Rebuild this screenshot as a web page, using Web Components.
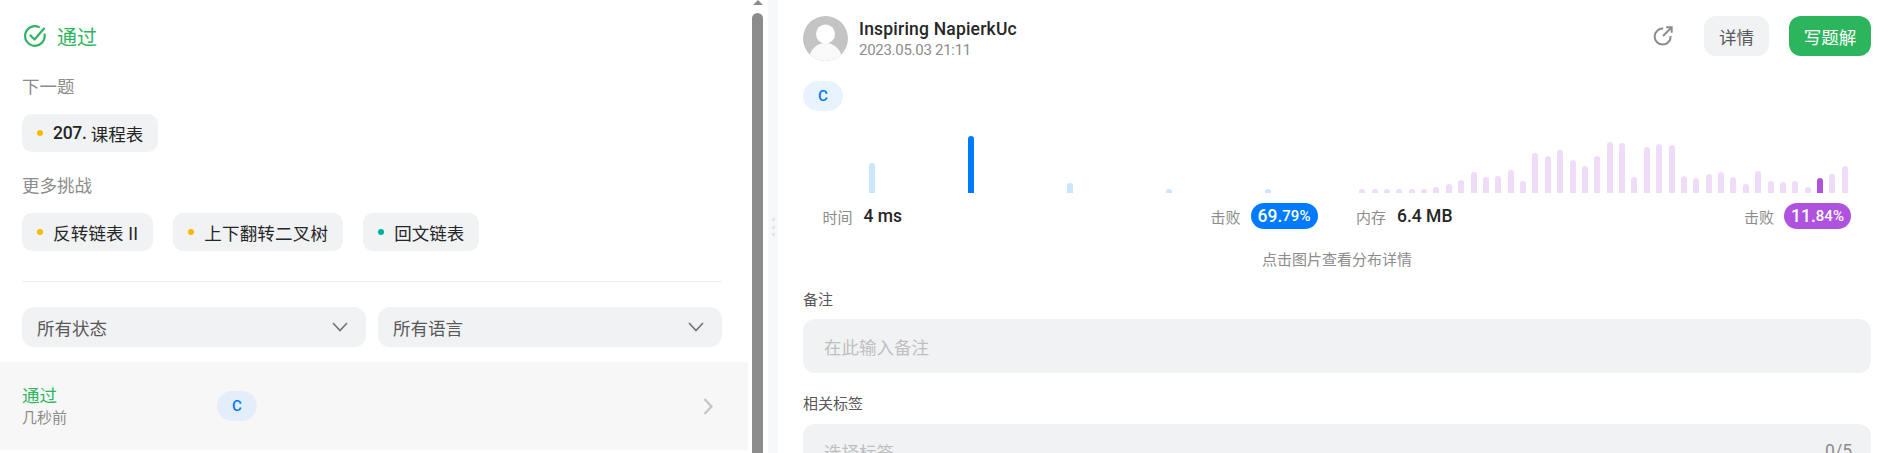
<!DOCTYPE html>
<html lang="zh">
<head>
<meta charset="utf-8">
<title>提交结果</title>
<style>
  html, body { margin: 0; height: 453px; overflow: hidden; background: #fff; }
  body { font-family: Roboto, "Noto Sans CJK SC", sans-serif; color: #262626; }
</style>
</head>
<body>
<submission-page>
  <result-panel slot="left"></result-panel>
  <detail-panel slot="right"></detail-panel>
</submission-page>

<script>
class SubmissionPage extends HTMLElement {
  connectedCallback() {
    this.attachShadow({ mode: 'open' });
    this.shadowRoot.innerHTML = `
      <style>
        :host { display: flex; height: 453px; overflow: hidden; }
        .left { display: block; width: 748px; flex: none; }
        .track { width: 20px; flex: none; display: flex; flex-direction: column; align-items: center; box-sizing: border-box; padding-right: 1px; background: #fff; }
        .arrow { width: 0; height: 0; border-left: 5.5px solid transparent; border-right: 5.5px solid transparent; border-bottom: 5px solid #8c8c8c; }
        .thumb { width: 11px; flex: 1; margin-top: 8px; background: #8c8c8c; border-radius: 6px 6px 0 0; }
        .divider { width: 10px; flex: none; background: #f7f8fa; display: flex; flex-direction: column; align-items: center; justify-content: center; gap: 4.5px; padding-top: 1px; box-sizing: border-box; padding-bottom: 0; }
        .divider i { width: 3px; height: 3px; background: #e6e6e6; }
        .right { flex: 1; min-width: 0; }
      </style>
      <div class="left"><slot name="left"></slot></div>
      <div class="track"><div class="arrow"></div><div class="thumb"></div></div>
      <div class="divider"><i></i><i></i><i></i></div>
      <div class="right"><slot name="right"></slot></div>
    `;
  }
}
customElements.define('submission-page', SubmissionPage);

class ProblemChip extends HTMLElement {
  connectedCallback() {
    const color = this.getAttribute('dot') || '#ffb800';
    this.attachShadow({ mode: 'open' });
    this.shadowRoot.innerHTML = `
      <style>
        :host { display: inline-flex; align-items: center; height: 38px; padding: 0 15px; background: #f1f2f4; border-radius: 10px; font-size: 17.5px; color: #262626; }
        i { width: 6px; height: 6px; border-radius: 50%; background: ${color}; margin-right: 10px; margin-left: 0; }
      </style>
      <i></i><slot></slot>
    `;
  }
}
customElements.define('problem-chip', ProblemChip);

class SelectBox extends HTMLElement {
  connectedCallback() {
    this.attachShadow({ mode: 'open' });
    this.shadowRoot.innerHTML = `
      <style>
        :host { display: flex; flex: 1; align-items: center; justify-content: space-between; height: 40px; padding: 0 18px 0 15px; background: #f1f2f4; border-radius: 12px; font-size: 17.5px; color: #595959; }
        svg { display: block; }
      </style>
      <slot></slot>
      <svg width="16" height="10" viewBox="0 0 16 10" fill="none" stroke="#737373" stroke-width="1.6"><path d="M1 1l7 7.5L15 1"/></svg>
    `;
  }
}
customElements.define('select-box', SelectBox);

class LangPill extends HTMLElement {
  connectedCallback() {
    this.attachShadow({ mode: 'open' });
    this.shadowRoot.innerHTML = `
      <style>
        :host { display: inline-flex; align-items: center; justify-content: center; width: 40px; height: 30px; border-radius: 15px; background: #e8f3ff; color: #007aff; font-size: 15px; font-weight: 500; }
      </style>
      <slot></slot>
    `;
  }
}
customElements.define('lang-pill', LangPill);

class ResultPanel extends HTMLElement {
  connectedCallback() {
    this.attachShadow({ mode: 'open' });
    this.shadowRoot.innerHTML = `
      <style>
        :host { display: block; height: 453px; overflow: hidden; }
        .body { padding: 20px 26px 0 22px; }
        .status { display: flex; align-items: center; gap: 10px; height: 32px; color: #2db55d; font-size: 20px; padding-left: 1px; }
        .status svg { display: block; }
        .cap { font-size: 17.5px; color: #8c8c8c; line-height: 24px; }
        .cap.first { margin-top: 23px; }
        .cap.second { margin-top: 22px; }
        .chips { display: flex; gap: 20px; margin-top: 15px; }
        .wide { letter-spacing: .2px; }
        b { font-weight: 500; letter-spacing: -.3px; }
        hr { border: 0; height: 1px; background: #f0f0f0; margin: 30px 0 25px; }
        .filters { display: flex; gap: 12px; }
        .row { display: flex; align-items: center; height: 88px; margin-top: 15px; background: #f7f7f7; padding: 0 35px 0 22px; }
        .when { width: 195px; }
        .ok { color: #2db55d; font-size: 17.5px; line-height: 24px; }
        .ago { color: #8c8c8c; font-size: 15px; line-height: 20px; }
        .row lang-pill { background: #e4eefa; }
        .row svg { margin-left: auto; display: block; }
      </style>
      <div class="body">
        <div class="status">
          <svg width="24" height="24" viewBox="0 0 24 24" fill="none" stroke="#2db55d" stroke-width="2.2" stroke-linecap="round" stroke-linejoin="round">
            <path d="M21.6 10.6A9.8 9.8 0 1 1 15.8 3"/>
            <path d="M7.5 11.5l4 4L21 4.5"/>
          </svg>
          <span>通过</span>
        </div>
        <div class="cap first">下一题</div>
        <div class="chips"><problem-chip><b>207.</b>&nbsp;课程表</problem-chip></div>
        <div class="cap second">更多挑战</div>
        <div class="chips">
          <problem-chip class="wide">反转链表 II</problem-chip>
          <problem-chip class="wide">上下翻转二叉树</problem-chip>
          <problem-chip dot="#00af9b">回文链表</problem-chip>
        </div>
        <hr>
        <div class="filters">
          <select-box>所有状态</select-box>
          <select-box>所有语言</select-box>
        </div>
      </div>
      <div class="row">
        <div class="when">
          <div class="ok">通过</div>
          <div class="ago">几秒前</div>
        </div>
        <lang-pill>C</lang-pill>
        <svg width="10" height="17" viewBox="0 0 10 17" fill="none" stroke="#c4c4c4" stroke-width="2.2"><path d="M1.5 1l7 7.5-7 7.5"/></svg>
      </div>
    `;
  }
}
customElements.define('result-panel', ResultPanel);

class StatChart extends HTMLElement {
  connectedCallback() {
    const heights = this.getAttribute('bars').split(',').map(Number);
    const active = Number(this.getAttribute('active'));
    const color = this.getAttribute('color');
    const bars = heights.map((h, i) =>
      `<div class="cell"><i style="height:${h}px;${i === active ? 'opacity:1' : ''}"></i></div>`).join('');
    this.attachShadow({ mode: 'open' });
    this.shadowRoot.innerHTML = `
      <style>
        :host { display: block; width: 495px; flex: none; }
        .bars { display: flex; align-items: flex-end; height: 68px; }
        .cell { flex: 1; display: flex; justify-content: center; }
        i { display: block; width: 6px; background: ${color}; opacity: var(--dim); border-radius: 3px 3px 0 0; }
        .meta { display: flex; align-items: center; height: 26px; margin-top: 10px; font-size: 15px; color: #8c8c8c; }
        .val { color: #262626; font-size: 17.5px; font-weight: 500; margin-left: 11px; }
        .beat { margin-left: auto; }
        .pct { margin-left: 10px; height: 26px; width: 67px; box-sizing: border-box; display: flex; align-items: center; justify-content: center; border-radius: 13px; background: ${color}; color: #fff; font-size: 17.5px; font-weight: 500; }
        .pct small { font-size: 15px; }
      </style>
      <div class="bars">${bars}</div>
      <div class="meta">
        <span>${this.getAttribute('label')}</span>
        <span class="val">${this.getAttribute('value')}</span>
        <span class="beat">击败</span>
        <span class="pct">${this.getAttribute('whole')}<small>${this.getAttribute('frac')}</small></span>
      </div>
    `;
  }
}
customElements.define('stat-chart', StatChart);

class DetailPanel extends HTMLElement {
  connectedCallback() {
    this.attachShadow({ mode: 'open' });
    this.shadowRoot.innerHTML = `
      <style>
        :host { display: block; height: 453px; overflow: hidden; padding: 16px 20px 0 25px; box-sizing: border-box; }
        .head { display: flex; align-items: center; height: 45px; }
        .avatar { display: block; flex: none; margin-right: 11px; }
        .name { font-size: 17.5px; font-weight: 500; color: #262626; line-height: 23px; letter-spacing: .2px; }
        .date { font-size: 15px; color: #8c8c8c; line-height: 18px; letter-spacing: -.28px; }
        .actions { margin-left: auto; display: flex; align-items: center; margin-top: -5px; }
        .share { display: block; margin-right: 31px; }
        .btn { height: 40px; display: flex; align-items: center; justify-content: center; border-radius: 12px; font-size: 17.5px; }
        .btn.detail { width: 65px; background: #f1f2f4; color: #595959; margin-right: 20px; }
        .btn.write { width: 82px; background: #2db55d; color: #fff; }
        .lang { display: flex; margin-top: 20px; }
        .charts { display: flex; gap: 38.5px; padding-left: 19.5px; margin-top: 14px; }
        .hint { text-align: center; font-size: 15px; color: #8c8c8c; line-height: 20px; margin-top: 21px; }
        label { display: block; font-size: 15px; color: #595959; line-height: 20px; }
        .l1 { margin-top: 20px; }
        .l2 { margin-top: 21px; }
        .field { background: #f1f2f4; border-radius: 12px; box-sizing: border-box; padding: 0 21px; font-size: 17.5px; color: #bfbfbf; display: flex; align-items: center; justify-content: space-between; }
        .note { height: 54px; margin-top: 9px; }
        .tags { height: 54px; margin-top: 10px; padding-right: 19px; }
        .count { color: #8c8c8c; font-size: 17.5px; }
      </style>
      <div class="head">
        <svg class="avatar" width="45" height="45" viewBox="0 0 45 45">
          <defs><clipPath id="av"><circle cx="22.5" cy="22.5" r="22.5"/></clipPath></defs>
          <g clip-path="url(#av)">
            <rect width="45" height="45" fill="#c4c4c4"/>
            <circle cx="22.5" cy="18" r="9.5" fill="#fff"/>
            <ellipse cx="22.5" cy="44" rx="16.5" ry="17" fill="#f9f9f9"/>
          </g>
        </svg>
        <div class="who">
          <div class="name">Inspiring NapierkUc</div>
          <div class="date">2023.05.03 21:11</div>
        </div>
        <div class="actions">
          <svg class="share" width="20" height="20" viewBox="0 0 20 20" fill="none" stroke="#8c8c8c" stroke-width="2">
            <path d="M10.2 2.6A8 8 0 1 0 17.6 10"/>
            <path d="M10 10L18.6 1.4M13.2 1.3h5.5v5.5"/>
          </svg>
          <div class="btn detail">详情</div>
          <div class="btn write">写题解</div>
        </div>
      </div>
      <div class="lang"><lang-pill>C</lang-pill></div>
      <div class="charts" style="--dim:.2">
        <stat-chart label="时间" value="4 ms" whole="69." frac="79%" color="#007aff" active="1" bars="30,57,10,4,4"></stat-chart>
        <stat-chart label="内存" value="6.4 MB" whole="11." frac="84%" color="#af52de" active="37" bars="4,4,4,4,4,4,6,9,13,21,16,17,23,12,40,37,43,33,27,37,51,50,16,46,49,48,17,15,19,21,16,9,22,12,11,12,6,15,19,27"></stat-chart>
      </div>
      <div class="hint">点击图片查看分布详情</div>
      <label class="l1">备注</label>
      <div class="field note">在此输入备注</div>
      <label class="l2">相关标签</label>
      <div class="field tags"><span>选择标签</span><span class="count">0/5</span></div>
    `;
  }
}
customElements.define('detail-panel', DetailPanel);
</script>
</body>
</html>
